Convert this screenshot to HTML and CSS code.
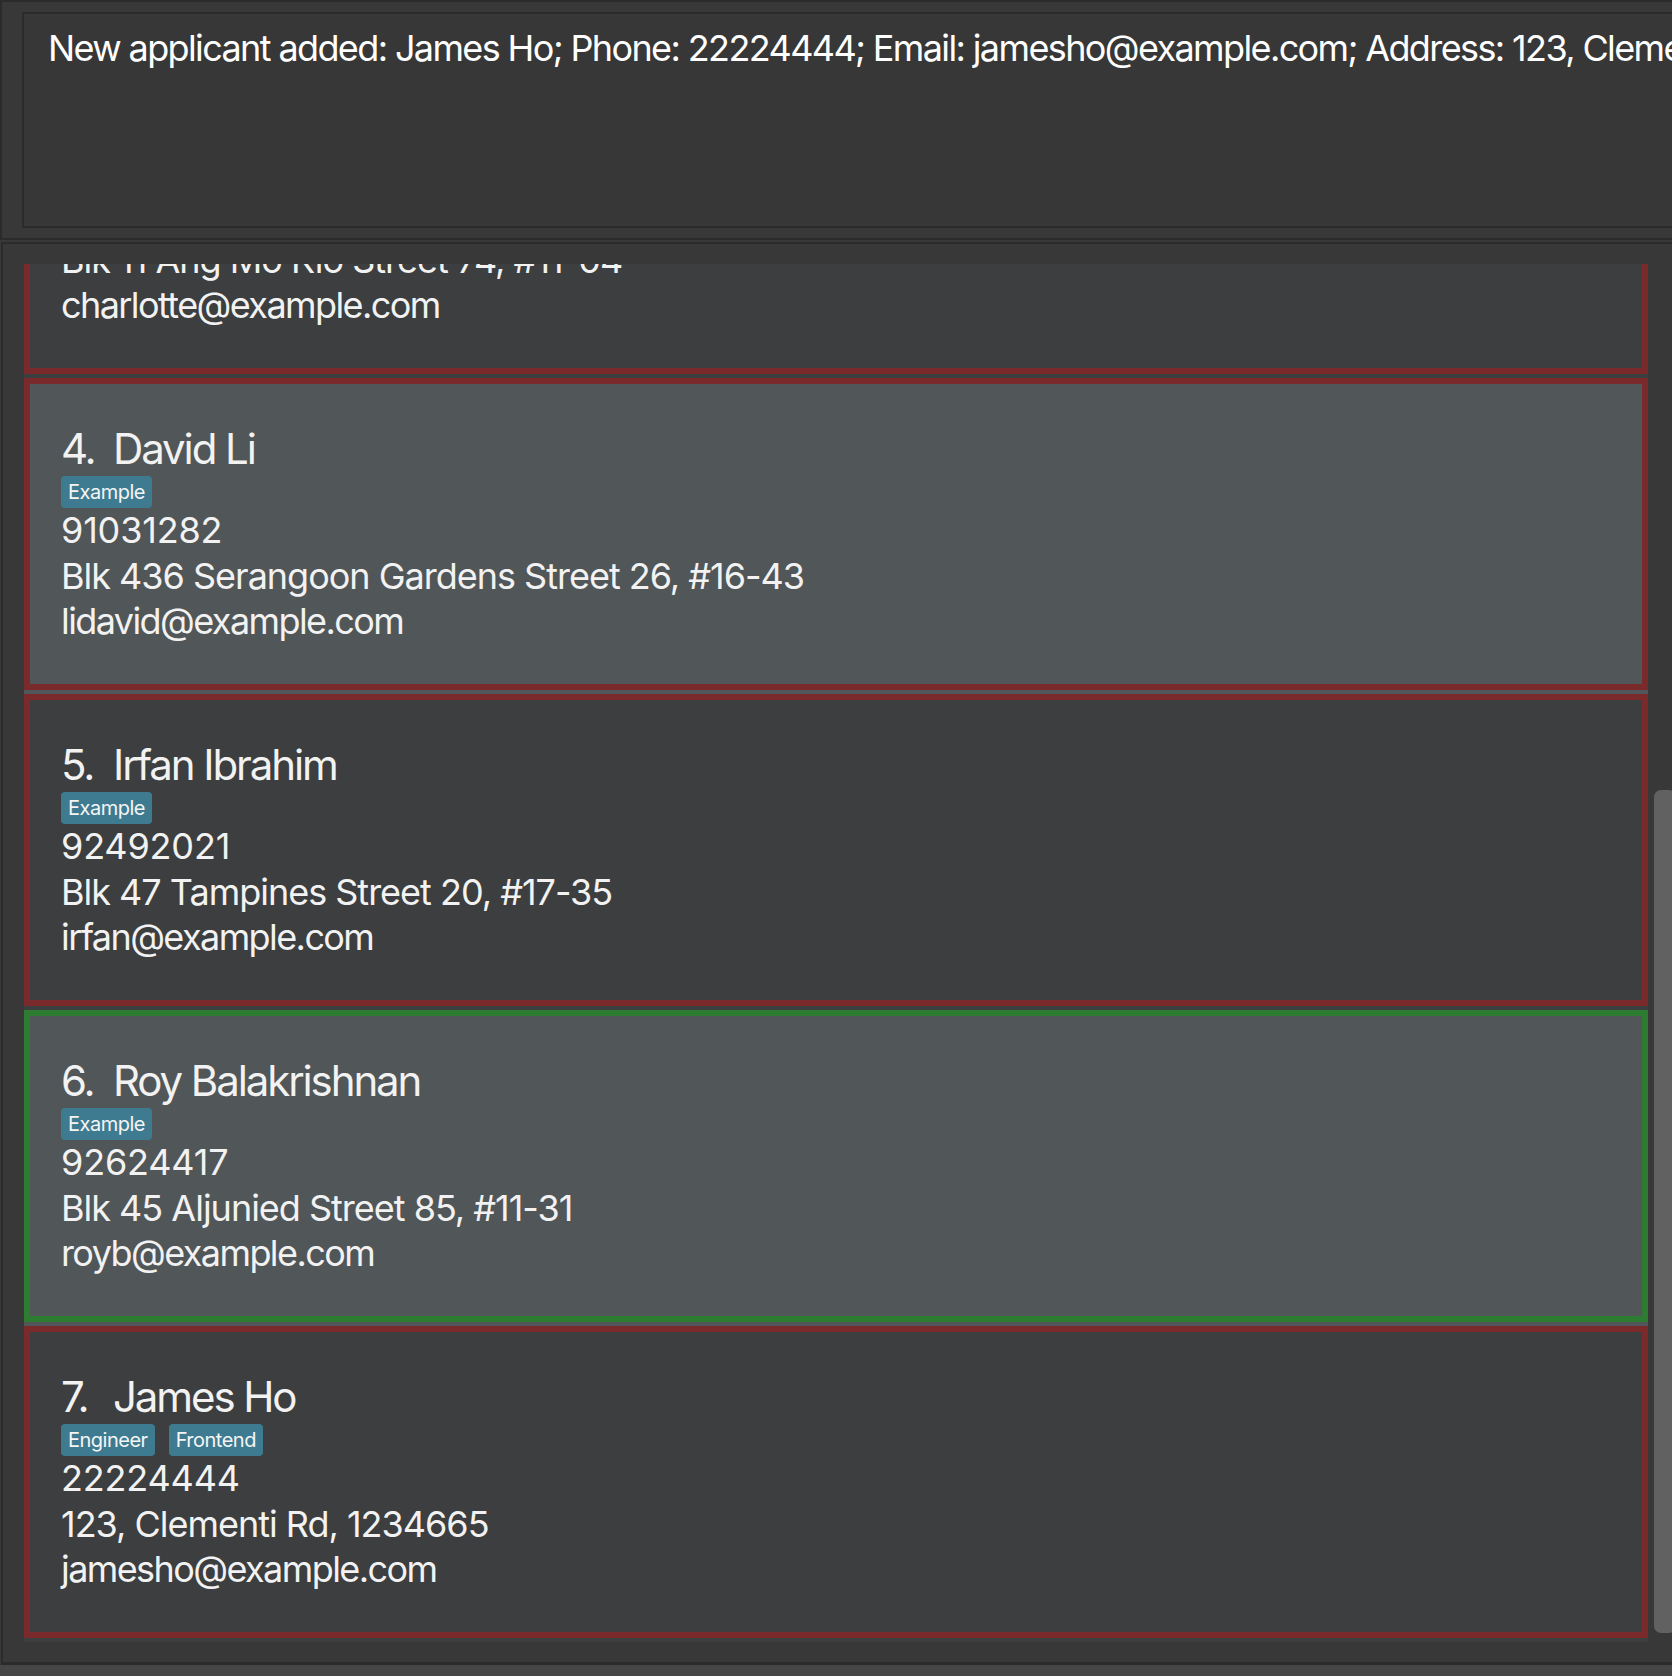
FILE: index.html
```html
<!DOCTYPE html>
<html>
<head>
<meta charset="utf-8">
<title>Applicants</title>
<link rel="stylesheet" href="styles.css">
</head>
<body>
<div class="result-pane">
  <div class="result-box">New applicant added: James Ho; Phone: 22224444; Email: jamesho@example.com; Address: 123, Clementi Rd, 1234665; Tags: [Engineer][Frontend]</div>
</div>
<div class="list-pane">
  <div class="viewport">
    <div class="list">
      <div class="cell cell-dark">
        <div class="card card-red">
          <div class="name-row"><span class="idx">3.</span><span class="name">Charlotte Oliveiro</span></div>
          <div class="tags"><span class="tag">Example</span></div>
          <div class="line phone">93210283</div>
          <div class="line address">Blk 11 Ang Mo Kio Street 74, #11-04</div>
          <div class="line email">charlotte@example.com</div>
        </div>
      </div>
      <div class="cell cell-light">
        <div class="card card-red">
          <div class="name-row"><span class="idx">4.</span><span class="name">David Li</span></div>
          <div class="tags"><span class="tag">Example</span></div>
          <div class="line phone">91031282</div>
          <div class="line address">Blk 436 Serangoon Gardens Street 26, #16-43</div>
          <div class="line email">lidavid@example.com</div>
        </div>
      </div>
      <div class="cell cell-dark">
        <div class="card card-red">
          <div class="name-row"><span class="idx">5.</span><span class="name">Irfan Ibrahim</span></div>
          <div class="tags"><span class="tag">Example</span></div>
          <div class="line phone">92492021</div>
          <div class="line address">Blk 47 Tampines Street 20, #17-35</div>
          <div class="line email">irfan@example.com</div>
        </div>
      </div>
      <div class="cell cell-light">
        <div class="card card-green">
          <div class="name-row"><span class="idx">6.</span><span class="name">Roy Balakrishnan</span></div>
          <div class="tags"><span class="tag">Example</span></div>
          <div class="line phone">92624417</div>
          <div class="line address">Blk 45 Aljunied Street 85, #11-31</div>
          <div class="line email">royb@example.com</div>
        </div>
      </div>
      <div class="cell cell-dark">
        <div class="card card-red">
          <div class="name-row"><span class="idx">7.</span><span class="name">James Ho</span></div>
          <div class="tags"><span class="tag">Engineer</span><span class="tag">Frontend</span></div>
          <div class="line phone">22224444</div>
          <div class="line address">123, Clementi Rd, 1234665</div>
          <div class="line email">jamesho@example.com</div>
        </div>
      </div>
    </div>
    <div class="scroll-track"><div class="scroll-thumb"></div></div>
  </div>
</div>
<div class="status-bar"></div>
</body>
</html>
```

FILE: styles.css
```css
html, body {
  margin: 0;
  padding: 0;
}
body {
  width: 1672px;
  height: 1676px;
  overflow: hidden;
  background: #383838;
  font-family: "Inter", "Noto Sans", sans-serif;
  color: #f2f2f2;
}

.result-pane {
  box-sizing: border-box;
  height: 240px;
  border-top: 2px solid #2b2b2b;
  border-left: 2px solid #2b2b2b;
  border-bottom: 2px solid #2b2b2b;
  padding: 10px 0 10px 20px;
  overflow: hidden;
}
.result-box {
  box-sizing: border-box;
  width: 1700px;
  height: 216px;
  border: 2px solid #2b2b2b;
  background: #373737;
  padding: 12px 0 0 24px;
  font-size: 36px;
  line-height: 44px;
  letter-spacing: -0.045em;
  color: #ffffff;
  white-space: nowrap;
  overflow: hidden;
}

.list-pane {
  box-sizing: border-box;
  margin-top: 2px;
  margin-left: 1px;
  height: 1423px;
  border-top: 2px solid #2b2b2b;
  border-left: 2px solid #2b2b2b;
  border-bottom: 3px solid #2b2b2b;
  padding: 20px 0 20px 21px;
  background: #383838;
}
.viewport {
  display: flex;
  height: 1378px;
  overflow: hidden;
}
.list {
  width: 1624px;
  flex: none;
  margin-top: -202px;
}
.cell {
  box-sizing: border-box;
  height: 316px;
  padding-bottom: 4px;
}
.cell-dark { background: #3c3e3f; }
.cell-light { background: #515658; }

.card {
  box-sizing: border-box;
  height: 312px;
  border: 6px solid #7b2a2b;
  padding: 39px 0 0 31px;
}
.card-green { border-color: #2e7c31; }

.name-row {
  font-size: 42px;
  line-height: 52px;
  white-space: nowrap;
  letter-spacing: -0.05em;
}
.idx {
  display: inline-block;
  width: 52px;
}
.tags {
  display: flex;
  gap: 14px;
  margin-top: 1px;
  height: 32px;
}
.tag {
  background: #3e7b91;
  color: #f5f5f5;
  font-size: 20px;
  line-height: 32px;
  height: 32px;
  padding: 0 7px;
  border-radius: 4px;
  letter-spacing: -0.025em;
}
.line {
  font-size: 36px;
  line-height: 45.5px;
  white-space: nowrap;
}
.phone { letter-spacing: -0.005em; }
.address { letter-spacing: -0.028em; }
.email { letter-spacing: -0.044em; }

.scroll-track {
  flex: none;
  margin-left: 6px;
  width: 22px;
}
.scroll-thumb {
  margin-top: 526px;
  height: 843px;
  width: 22px;
  background: #616161;
  border-radius: 7px;
}

.status-bar {
  height: 11px;
  background: #464646;
}
```
